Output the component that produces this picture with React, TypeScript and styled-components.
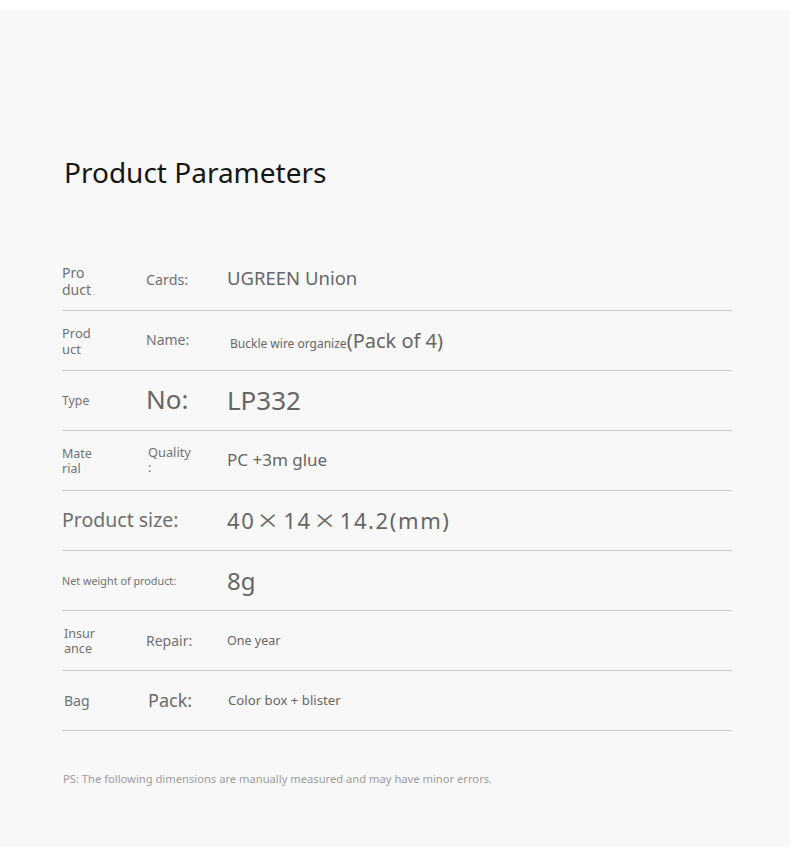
import React from "react";
import styled, { createGlobalStyle } from "styled-components";

const Global = createGlobalStyle`
  html, body { margin: 0; padding: 0; background: #ffffff; }
  body { font-family: "Noto Sans", "Noto Sans CJK SC", sans-serif; }
`;

const Page = styled.div`
  margin-top: 10px;
  background: #f8f8f8;
  min-height: 837px;
  padding: 142px 0 0 62px;
  box-sizing: border-box;
  display: flex;
  flex-direction: column;
`;

const Title = styled.h1`
  margin: 0 0 0 2px;
  font-size: 28px;
  line-height: 40px;
  font-weight: 400;
  color: #151515;
`;

const Table = styled.div`
  margin-top: 59px;
  width: 670px;
  display: flex;
  flex-direction: column;
`;

const Row = styled.div`
  display: grid;
  grid-template-columns: 84px 81px 1fr;
  align-items: center;
  height: 59px;
  border-bottom: 1px solid #c8c8c8;
`;

type CellProps = {
  $size: number;
  $lh?: number;
  $color?: string;
  $wide?: boolean;
  $pad?: number;
  $track?: number;
  $lift?: number;
};

const Cell = styled.div<CellProps>`
  grid-column: ${(p) => (p.$wide ? "span 2" : "span 1")};
  padding-left: ${(p) => p.$pad ?? 0}px;
  padding-bottom: ${(p) => p.$lift ?? 0}px;
  font-size: ${(p) => p.$size}px;
  line-height: ${(p) => (p.$lh ? `${p.$lh}px` : 1.25)};
  letter-spacing: ${(p) => p.$track ?? 0}px;
  color: ${(p) => p.$color ?? "#717171"};
  white-space: nowrap;
`;

const Small = styled.span`
  font-size: 12px;
`;

const Times = styled.span`
  display: inline-block;
  width: 28px;
  text-align: center;
  font-weight: 300;
  transform: scale(1.55, 1.3);
`;

const Note = styled.p`
  margin: 41px 0 0 1px;
  font-size: 11.2px;
  line-height: 14px;
  color: #9c9c9c;
`;

export default function App() {
  return (
    <>
      <Global />
      <Page>
        <Title>Product Parameters</Title>
        <Table>
          <Row>
            <Cell $size={14} $lh={17}>Pro<br />duct</Cell>
            <Cell $size={14.3} $lift={1}>Cards:</Cell>
            <Cell $size={18.5} $lift={5} $color="#666">UGREEN Union</Cell>
          </Row>
          <Row>
            <Cell $size={13} $lh={16}>Prod<br />uct</Cell>
            <Cell $size={14} $lift={1}>Name:</Cell>
            <Cell $size={20} $pad={3} $lift={1} $color="#666"><Small>Buckle wire organize</Small>(Pack of 4)</Cell>
          </Row>
          <Row>
            <Cell $size={12.3}>Type</Cell>
            <Cell $size={26} $lift={2} $color="#666">No:</Cell>
            <Cell $size={26} $color="#666">LP332</Cell>
          </Row>
          <Row>
            <Cell $size={12.5} $lh={15}>Mate<br />rial</Cell>
            <Cell $size={12.8} $lh={15} $pad={2} $lift={2}>Quality<br />:</Cell>
            <Cell $size={17} $lift={2} $color="#666">PC +3m glue</Cell>
          </Row>
          <Row>
            <Cell $size={19.5} $wide $color="#6f6f6f">Product size:</Cell>
            <Cell $size={22} $track={1.6} $color="#666">40<Times>×</Times>14<Times>×</Times>14.2(mm)</Cell>
          </Row>
          <Row>
            <Cell $size={10.8} $wide>Net weight of product:</Cell>
            <Cell $size={24} $color="#666">8g</Cell>
          </Row>
          <Row>
            <Cell $size={12.6} $lh={15} $pad={2}>Insur<br />ance</Cell>
            <Cell $size={14}>Repair:</Cell>
            <Cell $size={12.5} $color="#666">One year</Cell>
          </Row>
          <Row>
            <Cell $size={14} $pad={2}>Bag</Cell>
            <Cell $size={18} $pad={2} $color="#6a6a6a">Pack:</Cell>
            <Cell $size={13.2} $pad={1} $color="#666">Color box + blister</Cell>
          </Row>
        </Table>
        <Note>PS: The following dimensions are manually measured and may have minor errors.</Note>
      </Page>
    </>
  );
}
